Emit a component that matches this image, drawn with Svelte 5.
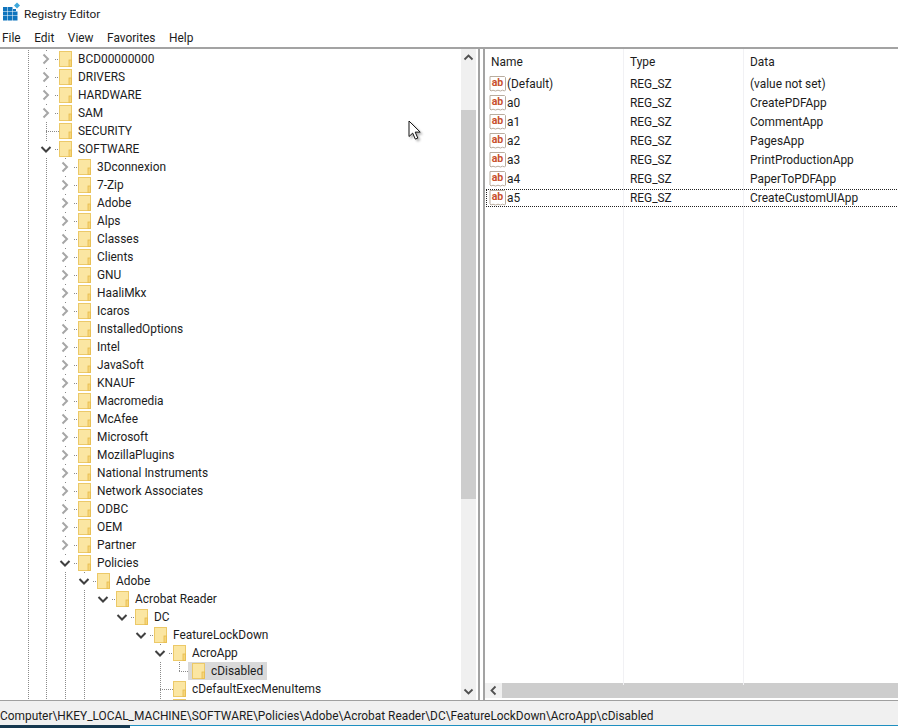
<script>
  const rows = [
    ['BCD00000000',0,'r',[28]],['DRIVERS',0,'r',[28]],['HARDWARE',0,'r',[28]],['SAM',0,'r',[28]],['SECURITY',0,'',[28]],['SOFTWARE',0,'d',[28]],
    ...['3Dconnexion','7-Zip','Adobe','Alps','Classes','Clients','GNU','HaaliMkx','Icaros','InstalledOptions','Intel','JavaSoft','KNAUF','Macromedia','McAfee','Microsoft','MozillaPlugins','National Instruments','Network Associates','ODBC','OEM','Partner'].map(n=>[n,1,'r',[28,65]]),
    ['Policies',1,'d',[28,65]],['Adobe',2,'d',[28,65,84]],['Acrobat Reader',3,'d',[28,65,84]],['DC',4,'d',[28,65,84]],['FeatureLockDown',5,'d',[28,65,84]],['AcroApp',6,'d',[28,65,84,160]],
    ['cDisabled',7,'',[28,65,84,160],true,179],['cDefaultExecMenuItems',6,'',[28,65,84,160]],['',6,'',[28,65,84,160]]
  ];
  rows.forEach(r=>{ r[3]=[...r[3],46]; });
  const values = [['(Default)','(value not set)'],['a0','CreatePDFApp'],['a1','CommentApp'],['a2','PagesApp'],['a3','PrintProductionApp'],['a4','PaperToPDFApp'],['a5','CreateCustomUIApp']];
</script>

<div class="win">
  <header class="title">
    <svg class="appicon" width="19" height="20" viewBox="0 0 19 20">
      <path d="M1 5h4.500v4h-4.500zM6 5h4.500v4h-4.500zM11 7h3v2h-3zM1 9.500h4.500v4h-4.500zM6 9.500h4.500v4h-4.500zM11 9.500h4.500v4h-4.500zM1 14h4.500v4.500h-4.500zM6 14h4.500v4.500h-4.500zM11 14h4.500v4.500h-4.500z" fill="#0f74bd"/>
      <path d="M15 0.500l3 3-3 3-3-3z" fill="#3fa9dc"/>
    </svg>
    <span>Registry Editor</span>
  </header>
  <nav class="menu"><span>File</span><span>Edit</span><span>View</span><span>Favorites</span><span>Help</span></nav>
  <main class="panes">
    <section class="tree">
      <div class="treelist">
        {#each rows as [name, lvl, kind, guides, sel, elbow]}
          <div class="row" style="padding-left:{39 + lvl * 19}px">
            {#each guides as g}<i class="guide" style="left:{g}px"></i>{/each}
            {#if elbow}<i class="guide elbow" style="left:{elbow}px"></i>{/if}
            {#if kind}
              <svg class="twist" width="14" height="14" viewBox="0 0 14 14">
                {#if kind === 'r'}<path d="M4.500 2.500 9 7l-4.500 4.500" fill="none" stroke="#a6a6a6" stroke-width="2"/>
                {:else}<path d="M2.500 5 7 9.500 11.500 5" fill="none" stroke="#404040" stroke-width="2"/>{/if}
              </svg>
              <i class="stub"></i>
            {:else}<i class="stub long"></i>{/if}
            <span class="item" class:sel>
              <svg class="folder" width="14" height="17" viewBox="0 0 14 17">
                <rect x="0.500" y="0.500" width="12" height="15" fill="#fbe6a2" stroke="#ecc968"/>
                <rect x="10" y="9" width="2.500" height="6.500" fill="#f7d679" stroke="#e5bb4e" stroke-width="0.800"/>
              </svg>
              {#if name}<span class="label">{name}</span>{/if}
            </span>
          </div>
        {/each}
      </div>
      <div class="vscroll">
        <svg class="arrow" width="15" height="17" viewBox="0 0 15 17"><path d="M3.500 10.500 7.500 6.500l4 4" fill="none" stroke="#505050" stroke-width="1.800"/></svg>
        <div class="track"><div class="thumb"></div></div>
        <svg class="arrow" width="15" height="17" viewBox="0 0 15 17"><path d="M3.500 6.500 7.500 10.500l4-4" fill="none" stroke="#505050" stroke-width="1.800"/></svg>
      </div>
    </section>
    <section class="list">
      <div class="sep one"></div><div class="sep two"></div>
      <div class="head"><span class="c1">Name</span><span class="c2">Type</span><span class="c3">Data</span></div>
      <div class="body">
        {#each values as [n, d], i}
          <div class="vrow" class:focus={i === 6}>
            <span class="c1 named">
              <svg width="18" height="18" viewBox="0 0 18 18">
                <path d="M1 1.500h14.500l1 1v12.500l-1 1-2-.800-2 .800-2.500-.800-2.500.800-2.500-.800-2 .800-1-1z" fill="#fff" stroke="#b9ad9f"/>
                <text x="8.500" y="10.500" class="ab">ab</text>
              </svg>
              {n}
            </span>
            <span class="c2">REG_SZ</span><span class="c3">{d}</span>
          </div>
        {/each}
      </div>
      <div class="hscroll">
        <svg width="17" height="15" viewBox="0 0 17 15"><path d="M10.500 3.500 6.500 7.500l4 4" fill="none" stroke="#505050" stroke-width="1.800"/></svg>
        <div class="hthumb"></div>
      </div>
    </section>
  </main>
  <footer class="status">Computer\HKEY_LOCAL_MACHINE\SOFTWARE\Policies\Adobe\Acrobat Reader\DC\FeatureLockDown\AcroApp\cDisabled</footer>
  <div class="task"><div class="dark"></div></div>
  <svg class="cursor" width="14" height="21" viewBox="0 0 14 21"><path d="M1 1v15.500l3.700-3.400 2.600 6 2.500-1-2.600-6h5z" fill="#fff" stroke="#111" stroke-width="1"/></svg>
</div>

<style>
  :global(body){margin:0;background:#fff}
  .win{position:relative;width:898px;height:728px;overflow:hidden;background:#fff;color:#1c1c1c;font:12px/18px Roboto,"Liberation Sans",sans-serif;display:flex;flex-direction:column}
  .title{height:28px;display:flex;align-items:center;gap:3px;padding-left:2px;box-sizing:border-box;font-size:11.800px}
  .appicon{margin-top:-5px;flex:none}
  .menu{height:19px;display:flex;gap:13.500px;padding-left:2px;align-items:center;font-size:11.900px;box-sizing:border-box;padding-top:1px}
  .panes{height:654px;display:grid;grid-template-columns:480px 1fr;gap:3px;border-top:2px solid #a3a3a3;border-bottom:1px solid #9f9f9f;box-sizing:border-box;flex:none}
  .tree{display:flex;border-right:2px solid #a3a3a3;overflow:hidden;min-height:0;padding-right:2px}
  .treelist{flex:1;overflow:hidden;min-width:0;padding-top:1px}
  .row{position:relative;height:18px;display:flex;align-items:center;white-space:nowrap}
  .guide{position:absolute;top:0;bottom:0;width:1px;background:repeating-linear-gradient(#8a8a8a 0 1px,transparent 1px 2px)}
  .elbow{bottom:9px}
  .twist{flex:none;width:14px;height:16px;background:#fff;position:relative}
  .stub{flex:none;width:6px;height:1px;background:repeating-linear-gradient(90deg,transparent 0 2px,#8a8a8a 2px 3px,transparent 3px 4px,#8a8a8a 4px 5px,transparent 5px 6px);position:relative}
  .stub.long{width:13px;margin-left:7px;background:repeating-linear-gradient(90deg,#8a8a8a 0 1px,transparent 1px 2px)}
  .item{display:inline-flex;align-items:center;position:relative;height:18px}
  .item.sel{background:#d9d9d9;padding-right:4px;margin-left:-4px;padding-left:4px}
  .folder{flex:none;margin-right:5px}
  .label{font-size:11.900px}
  .vscroll{width:15px;background:#f0f0f0;display:flex;flex-direction:column;flex:none}
  .arrow{flex:none}
  .track{flex:1;padding-top:44px;padding-bottom:184px;display:flex}
  .thumb{flex:1;background:#cdcdcd}
  .list{position:relative;border-left:2px solid #a3a3a3;display:flex;flex-direction:column;min-width:0;overflow:hidden}
  .sep{position:absolute;top:0;bottom:15px;width:1px;background:#f1f1f4}
  .sep.one{left:138px}.sep.two{left:258px}
  .head{height:26px;display:flex;align-items:center;position:relative;flex:none}
  .body{flex:1;position:relative}
  .vrow{height:19px;display:flex;align-items:center;position:relative;white-space:nowrap;box-sizing:border-box;margin-left:1px;padding-bottom:2px}
  .vrow.focus{outline:1px dotted #222;outline-offset:-1px;height:18px;margin-right:-3px;padding-bottom:1px}
  .c1{width:139px;padding-left:6px;box-sizing:border-box;flex:none;font-size:11.900px}
  .vrow .c1{padding-left:3px;width:138px}
  .c2{width:120px;padding-left:6px;box-sizing:border-box;flex:none;font-size:11.900px}
  .c3{padding-left:6px;font-size:11.900px}
  .named{display:flex;align-items:center;gap:0}
  .ab{font:bold 10.500px Roboto,sans-serif;fill:#c8502d;text-anchor:middle}
  .hscroll{height:15px;margin-bottom:2px;background:#f0f0f0;display:flex;align-items:stretch;flex:none}
  .hthumb{flex:1;background:#cdcdcd}
  .status{height:24px;background:#f0f0f0;line-height:30px;font-size:11.900px;white-space:nowrap;flex:none;overflow:hidden}
  .task{height:3px;background:#fff;flex:none;border-top:1px solid #1e8fc0;box-sizing:border-box;position:relative}
  .dark{width:130px;height:3px;background:#16384f;position:absolute;top:-1px;left:0}
  .cursor{position:absolute;left:408px;top:120px;filter:drop-shadow(2px 2px 1px rgba(0,0,0,.3))}
</style>
